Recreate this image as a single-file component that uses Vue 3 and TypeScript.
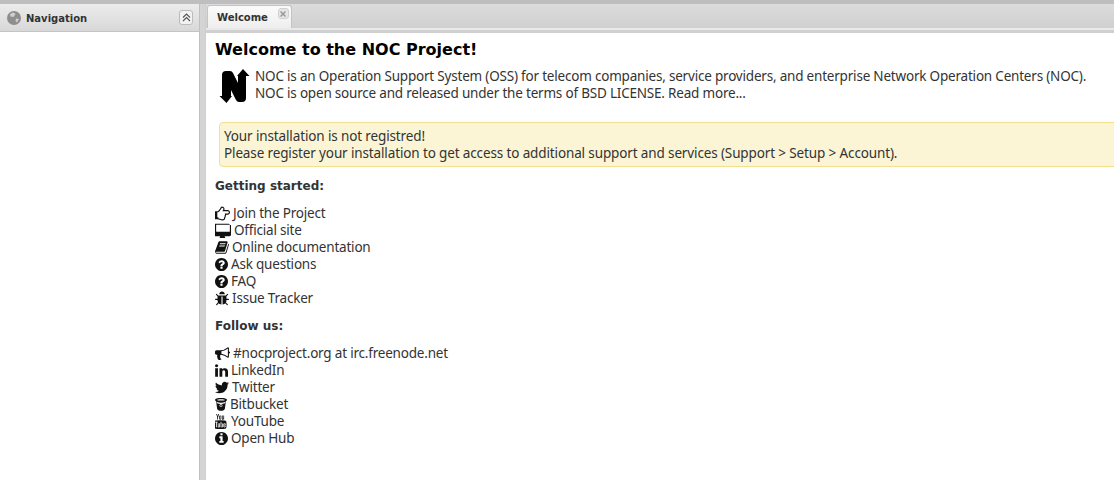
<script setup lang="ts">
interface LinkItem { label: string; icon: string; w: number }
const viewBoxes: Record<string, string> = {
  hand: '0 256 1664 1280',
  desktop: '0 64 1792 1536',
  book: '50 120 1690 1550',
  question: '128 128 1536 1536',
  bug: '96 64 1600 1600',
  bullhorn: '0 192 1792 1520',
  linkedin: '128 148 1536 1468',
  twitter: '110 240 1574 1300',
  bitbucket: '132 64 1528 1640',
  youtube: '128 0 1536 1792',
  info: '128 128 1536 1536'
}
const paths: Record<string, string> = {
  hand: 'M384 1344q0-26-19-45t-45-19-45 19-19 45 19 45 45 19 45-19 19-45zm1152-576q0-51-39-89.500t-89-38.500h-576q0-20 15-48.500t33-55 33-68 15-84.500q0-67-44.500-97.500t-115.500-30.500q-24 0-90 139-24 44-37 65-40 64-112 145-71 81-101 106-69 57-140 57h-32v640h32q72 0 167 32t193.500 64 179.500 32q189 0 189-167 0-26-5-56 30-16 47.500-52.500t17.500-73.500-18-69q53-50 53-119 0-25-10-55.500t-25-47.500h331q52 0 90-38t38-90zm128-1q0 105-75.500 181t-180.500 76h-169q-4 62-37 119 3 21 3 43 0 101-60 178 1 139-85 219.500t-227 80.500q-133 0-322-69-164-59-223-59h-288q-53 0-90.500-37.500t-37.500-90.500v-640q0-53 37.500-90.500t90.500-37.500h288q10 0 21.500-4.500t23.500-14 22.500-18 24-22.500 20.500-21.500 19-21.500 14-17q65-74 100-129 13-21 33-62t37-72 40.500-63 55-49.500 69.500-17.500q125 0 206.500 67t81.500 189q0 68-22 128h374q104 0 180 76t76 179z',
  desktop: 'M1664 928v-704q0-13-9.500-22.500t-22.500-9.500h-1472q-13 0-22.500 9.500t-9.500 22.500v704q0 13 9.500 22.500t22.500 9.500h1472q13 0 22.500-9.500t9.500-22.500zm128-704v1088q0 66-47 113t-113 47h-544q0 37 16 77.500t32 71 16 43.500q0 26-19 45t-45 19h-512q-26 0-45-19t-19-45q0-14 16-44t32-70 16-78h-544q-66 0-113-47t-47-113v-1088q0-66 47-113t113-47h1472q66 0 113 47t47 113z',
  book: 'M1703 478q40 57 18 129l-275 906q-19 64-76.500 107.500t-122.500 43.500h-923q-77 0-148.500-53.500t-99.500-131.500q-24-67-2-127 0-4 3-27t4-37q1-8-3-21.500t-3-19.500q2-11 8-21t16.500-23.500 16.500-23.500q23-38 45-91.500t30-91.500q3-10 .5-30t-.5-28q3-11 17-28t17-23q21-36 42-92t25-90q1-9-2.500-32t.5-28q4-13 22-30.500t22-22.500q19-26 42.500-84.500t27.500-96.500q1-8-3-25.500t-2-26.500q2-8 9-18t18-23 17-21q8-12 16.500-30.500t15-35 16-36 19.500-32 26.500-23.500 36-11.500 47.500 5.500l-1 3q38-9 51-9h761q74 0 114 56t18 130l-274 906q-36 119-71.500 153.500t-128.500 34.500h-869q-27 0-38 15-11 16-1 43 24 70 144 70h923q29 0 56-15.500t35-41.500l300-987q7-22 5-57 38 15 59 43zm-1064 2q-4 13 2 22.500t20 9.500h608q13 0 25.500-9.500t16.500-22.500l21-64q4-13-2-22.500t-20-9.500h-608q-13 0-25.500 9.500t-16.500 22.500zm-83 256q-4 13 2 22.500t20 9.500h608q13 0 25.500-9.500t16.500-22.500l21-64q4-13-2-22.500t-20-9.500h-608q-13 0-25.500 9.500t-16.500 22.500z',
  question: 'M1024 1376v-192q0-14-9-23t-23-9h-192q-14 0-23 9t-9 23v192q0 14 9 23t23 9h192q14 0 23-9t9-23zm256-672q0-88-55.500-163t-138.500-116-170-41q-243 0-371 213-15 24 8 42l132 100q7 6 19 6 16 0 25-12 53-68 86-92 34-24 86-24 48 0 85.500 26t37.500 59q0 38-20 61t-68 45q-63 28-115.500 86.500t-52.500 125.500v36q0 14 9 23t23 9h192q14 0 23-9t9-23q0-19 21.500-49.500t54.500-49.500q32-18 49-28.500t46-35 44.500-48 28-60.500 12.500-81zm384 192q0 209-103 385.500t-279.500 279.500-385.500 103-385.500-103-279.500-279.500-103-385.500 103-385.500 279.500-279.500 385.500-103 385.500 103 279.500 279.500 103 385.500z',
  bug: 'M1696 960q0 26-19 45t-45 19h-224q0 171-67 290l208 209q19 19 19 45t-19 45q-18 19-45 19t-45-19l-198-197q-5 5-15 13t-42 28.500-65 36.500-82 29-97 13v-896h-128v896q-51 0-101.500-13.500t-87-33-66-39-43.500-32.500l-15-14-183 207q-20 21-48 21-24 0-43-16-19-18-20.500-44.500t15.500-46.500l202-227q-58-114-58-274h-224q-26 0-45-19t-19-45 19-45 45-19h224v-294l-173-173q-19-19-19-45t19-45 45-19 45 19l173 173h844l173-173q19-19 45-19t45 19 19 45-19 45l-173 173v294h224q26 0 45 19t19 45zm-480-576h-640q0-133 93.500-226.500t226.500-93.500 226.500 93.500 93.500 226.500z',
  bullhorn: 'M1664 704q53 0 90.500 37.500t37.500 90.500-37.500 90.500-90.500 37.500v384q0 52-38 90t-90 38q-417-347-812-380-58 19-91 66t-31 100.500 40 92.500q-20 33-23 65.500t6 58 33.500 55 48 50 61.500 50.500q-29 58-111.500 83t-168.500 11.500-132-55.500q-7-23-29.500-87.500t-32-94.500-23-89-15-101 3.500-98.500 22-110.500h-122q-66 0-113-47t-47-113v-192q0-66 47-113t113-47h480q435 0 896-384 52 0 90 38t38 90v384zm-128 604v-954q-394 302-768 343v270q377 42 768 341z',
  linkedin: 'M477 625v991h-330v-991h330zm21-306q1 73-50.500 122t-135.500 49h-2q-82 0-132-49t-50-122q0-74 51.500-122.500t134.500-48.500 133 48.500 51 122.500zm1166 729v568h-329v-530q0-105-40.500-164.500t-126.500-59.500q-63 0-105.500 34.500t-63.500 85.500q-11 30-11 81v553h-329q2-399 2-647t-1-296l-1-48h329v144h-2q20-32 41-56t56.500-52 87-43.500 114.500-15.500q171 0 275 113.500t104 332.500z',
  twitter: 'M1684 408q-67 98-162 167 1 14 1 42 0 130-38 259.500t-115.500 248.500-184.500 210.500-258 146-323 54.500q-271 0-496-145 35 4 78 4 225 0 401-138-105-2-188-64.500t-114-159.500q33 5 61 5 43 0 85-11-112-23-185.500-111.500t-73.500-205.500v-4q68 38 146 41-66-44-105-115t-39-154q0-88 44-163 121 149 294.500 238.500t371.500 99.500q-8-38-8-74 0-134 94.500-228.500t228.500-94.500q140 0 236 102 109-21 205-78-37 115-142 178 92-10 184-50z',
  bitbucket: 'M896 64C1340 64 1660 150 1660 300c0 70-50 110-140 150l-130 980c-12 90-70 140-150 180-210 100-480 100-690 0-80-40-138-90-150-180L270 450C180 410 132 370 132 300 132 150 452 64 896 64zM896 210c-270 0-500 40-500 90s230 90 500 90 500-40 500-90-230-90-500-90zM350 560l35 160c330 130 690 130 1020 0l35-160c-340 140-750 140-1090 0zM896 830a190 190 0 1 0 .1 0zM896 930a90 90 0 1 1-.1 0z',
  youtube: 'M971 1244v211q0 67-39 67-23 0-45-22v-301q22-22 45-22 39 0 39 67zm338 1v46h-90v-46q0-68 45-68t45 68zm-966-218h107v-94h-312v94h105v569h100v-569zm288 569h89v-494h-89v378q-30 42-57 42-18 0-21-21-1-3-1-35v-364h-89v391q0 49 8 73 12 37 58 37 48 0 102-61v54zm429-148v-197q0-73-9-99-17-56-71-56-50 0-93 54v-217h-89v663h89v-48q45 55 93 55 54 0 71-55 9-27 9-100zm338-10v-13h-91q0 51-2 61-7 36-40 36-46 0-46-69v-87h179v-103q0-79-27-116-39-51-106-51-68 0-107 51-28 37-28 116v173q0 79 29 116 39 51 108 51 72 0 108-53 18-27 21-54 2-9 2-58zm-608-913v-210q0-69-43-69t-43 69v210q0 70 43 70t43-70zm719 751q0 234-26 350-14 59-58 99t-102 46q-184 21-555 21t-555-21q-58-6-102.500-46t-57.500-99q-26-112-26-350 0-234 26-350 14-59 58-99t103-47q183-20 554-20t555 20q58 7 102.500 47t57.500 99q26 112 26 350zm-998-1276h102l-121 399v271h-100v-271q-14-74-61-212-37-103-65-187h106l71 263zm370 333v175q0 81-28 118-38 51-106 51-67 0-105-51-28-38-28-118v-175q0-80 28-117 38-51 105-51 68 0 106 51 28 37 28 117zm335-162v499h-91v-55q-53 62-103 62-46 0-59-37-8-24-8-75v-394h91v367q0 33 1 35 3 22 21 22 27 0 57-43v-381h91z',
  info: 'M1152 1376v-160q0-14-9-23t-23-9h-96v-512q0-14-9-23t-23-9h-320q-14 0-23 9t-9 23v160q0 14 9 23t23 9h96v320h-96q-14 0-23 9t-9 23v160q0 14 9 23t23 9h448q14 0 23-9t9-23zm-128-896v-160q0-14-9-23t-23-9h-192q-14 0-23 9t-9 23v160q0 14 9 23t23 9h192q14 0 23-9t9-23zm640 416q0 209-103 385.500t-279.500 279.500-385.500 103-385.500-103-279.500-279.500-103-385.500 103-385.500 279.500-279.500 385.500-103 385.500 103 279.500 279.500 103 385.500z'
}
const started: LinkItem[] = [
  { label: 'Join the Project', icon: 'hand', w: 15 },
  { label: 'Official site', icon: 'desktop', w: 16 },
  { label: 'Online documentation', icon: 'book', w: 14 },
  { label: 'Ask questions', icon: 'question', w: 13 },
  { label: 'FAQ', icon: 'question', w: 13 },
  { label: 'Issue Tracker', icon: 'bug', w: 14 }
]
const follow: LinkItem[] = [
  { label: '#nocproject.org at irc.freenode.net', icon: 'bullhorn', w: 15 },
  { label: 'LinkedIn', icon: 'linkedin', w: 13 },
  { label: 'Twitter', icon: 'twitter', w: 14 },
  { label: 'Bitbucket', icon: 'bitbucket', w: 12 },
  { label: 'YouTube', icon: 'youtube', w: 13 },
  { label: 'Open Hub', icon: 'info', w: 13 }
]
</script>

<template>
  <div class="app">
    <aside class="nav">
      <header class="nav-head">
        <svg class="globe" viewBox="0 0 14 14" aria-hidden="true">
          <circle cx="7" cy="7" r="7" fill="#8e8e8e" />
          <path d="M3 3 6.500 1.500 8.500 3 6.500 6 3.500 5.500ZM9 7.500 12 8 10 11.500 8.500 10Z" fill="#cfcfcf" />
        </svg>
        <span class="nav-title">Navigation</span>
        <button class="collapse" type="button" aria-label="Collapse">
          <svg viewBox="0 0 9 9" width="9" height="9" aria-hidden="true">
            <path d="M1 4.500 4.500 1 8 4.500M1 8 4.500 4.500 8 8" fill="none" stroke="#555" stroke-width="1.100" />
          </svg>
        </button>
      </header>
    </aside>
    <main class="main">
      <div class="tabbar">
        <div class="tab">
          <span class="tab-label">Welcome</span>
          <span class="tab-close">
            <svg viewBox="0 0 6 6" width="6" height="6" aria-hidden="true">
              <path d="M.5.500 5.500 5.500M5.500.500 .5 5.500" stroke="#999" stroke-width="1.500" />
            </svg>
          </span>
        </div>
      </div>
      <div class="strip"></div>
      <section class="content">
        <h1 class="title">Welcome to the NOC Project!</h1>
        <div class="intro">
          <svg class="logo" viewBox="0 0 31 34" aria-hidden="true">
            <path d="M3 27V6Q3 2 7 2H11Q13 2 14 4L19 14V7H18L24 0 30.500 7H27V29Q27 33 23 33H20Q18 33 17 31L12 21V27H13L7.500 34 .5 27Z" fill="#000" />
          </svg>
          <p class="intro-text">NOC is an Operation Support System (OSS) for telecom companies, service providers, and enterprise Network Operation Centers (NOC).<br />NOC is open source and released under the terms of BSD LICENSE. Read more...</p>
        </div>
        <div class="notice">Your installation is not registred!<br />Please register your installation to get access to additional support and services (Support &gt; Setup &gt; Account).</div>
        <h2 class="sub">Getting started:</h2>
        <ul class="links">
          <li v-for="item in started" :key="item.label">
            <svg class="ico" :width="item.w" height="15" :viewBox="viewBoxes[item.icon]" preserveAspectRatio="xMinYMid meet" aria-hidden="true"><path :d="paths[item.icon]" /></svg>{{ item.label }}
          </li>
        </ul>
        <h2 class="sub">Follow us:</h2>
        <ul class="links">
          <li v-for="item in follow" :key="item.label">
            <svg class="ico" :width="item.w" height="15" :viewBox="viewBoxes[item.icon]" preserveAspectRatio="xMinYMid meet" aria-hidden="true"><path :d="paths[item.icon]" /></svg>{{ item.label }}
          </li>
        </ul>
      </section>
    </main>
  </div>
</template>

<style>
html, body { margin: 0; background: #fff; overflow: hidden; }
</style>

<style scoped>
.app {
  display: flex;
  height: 476px;
  width: 1114px;
  border-top: 4px solid #bebebe;
  background: #d4d4d4;
  font-family: "Noto Sans", sans-serif;
  overflow: hidden;
}
.nav { width: 199px; flex: none; background: #fff; border-right: 1px solid #c0c0c0; }
.nav-head {
  height: 28px;
  box-sizing: border-box;
  display: flex;
  align-items: center;
  padding: 0 6px 0 7px;
  gap: 5px;
  background: linear-gradient(#ececec, #d8d8d8);
  border-bottom: 1px solid #c4c4c4;
}
.globe { width: 14px; height: 14px; flex: none; }
.nav-title { flex: 1; padding-top: 1px; font: bold 10px "DejaVu Sans", sans-serif; color: #333; }
.collapse {
  width: 14px; height: 15px; padding: 0; display: flex; align-items: center; justify-content: center;
  border: 1px solid #bbb; border-radius: 3px; background: #f2f2f2;
}
.main { flex: 1; margin-left: 5px; border-left: 1px solid #cfcfcf; min-width: 0; display: flex; flex-direction: column; background: #fff; }
.tabbar {
  height: 24px;
  flex: none;
  background: linear-gradient(#dcdcdc, #d0d0d0);
  display: flex;
  align-items: flex-end;
  padding-left: 1px;
  box-sizing: border-box;
}
.tab {
  width: 85px; height: 23px; box-sizing: border-box;
  display: flex; padding: 6px 0 0 9px; gap: 10px;
  background: linear-gradient(#fbfbfb, #eee);
  border: 1px solid #c4c4c4; border-bottom: 0; border-radius: 3px 3px 0 0;
}
.tab-label { font: bold 10px "DejaVu Sans", sans-serif; color: #333; }
.tab-close {
  width: 11px; height: 11px; margin-top: -4px; display: flex; align-items: center; justify-content: center;
  background: #e6e6e6; border: 1px solid #d0d0d0; border-radius: 3px; box-sizing: border-box;
}
.strip { height: 5px; flex: none; box-sizing: border-box; background: #e9e9e9; border-bottom: 3px solid #d0d0d0; }
.content { flex: 1; padding: 5px 0 0 9px; color: #333; font-size: 13.5px; line-height: 17px; }
.title { margin: 0; font: bold 16px/24px "DejaVu Sans", sans-serif; color: #000; }
.intro { display: flex; margin: 6px 0 0 4px; letter-spacing: -.2px; }
.logo { width: 31px; height: 34px; flex: none; margin: 1px 5px 0 0; }
.intro-text { margin: 0; white-space: nowrap; }
.notice {
  margin: 19px -10px 0 4px; padding: 5px 4px 4px;
  background: #fbf5d6; border: 1px solid #f0e08f; border-radius: 4px;
  white-space: nowrap;
  letter-spacing: -.13px;
}
.sub { margin: 11px 0 0; font: bold 12px/17px "DejaVu Sans", sans-serif; }
.links { list-style: none; margin: 10px 0 0; padding: 0; letter-spacing: -.2px; }
.links + .sub { margin-top: 11px; }
.links li { display: flex; align-items: center; height: 17px; gap: 3px; white-space: nowrap; }
.ico { flex: none; fill: #111; }
</style>
